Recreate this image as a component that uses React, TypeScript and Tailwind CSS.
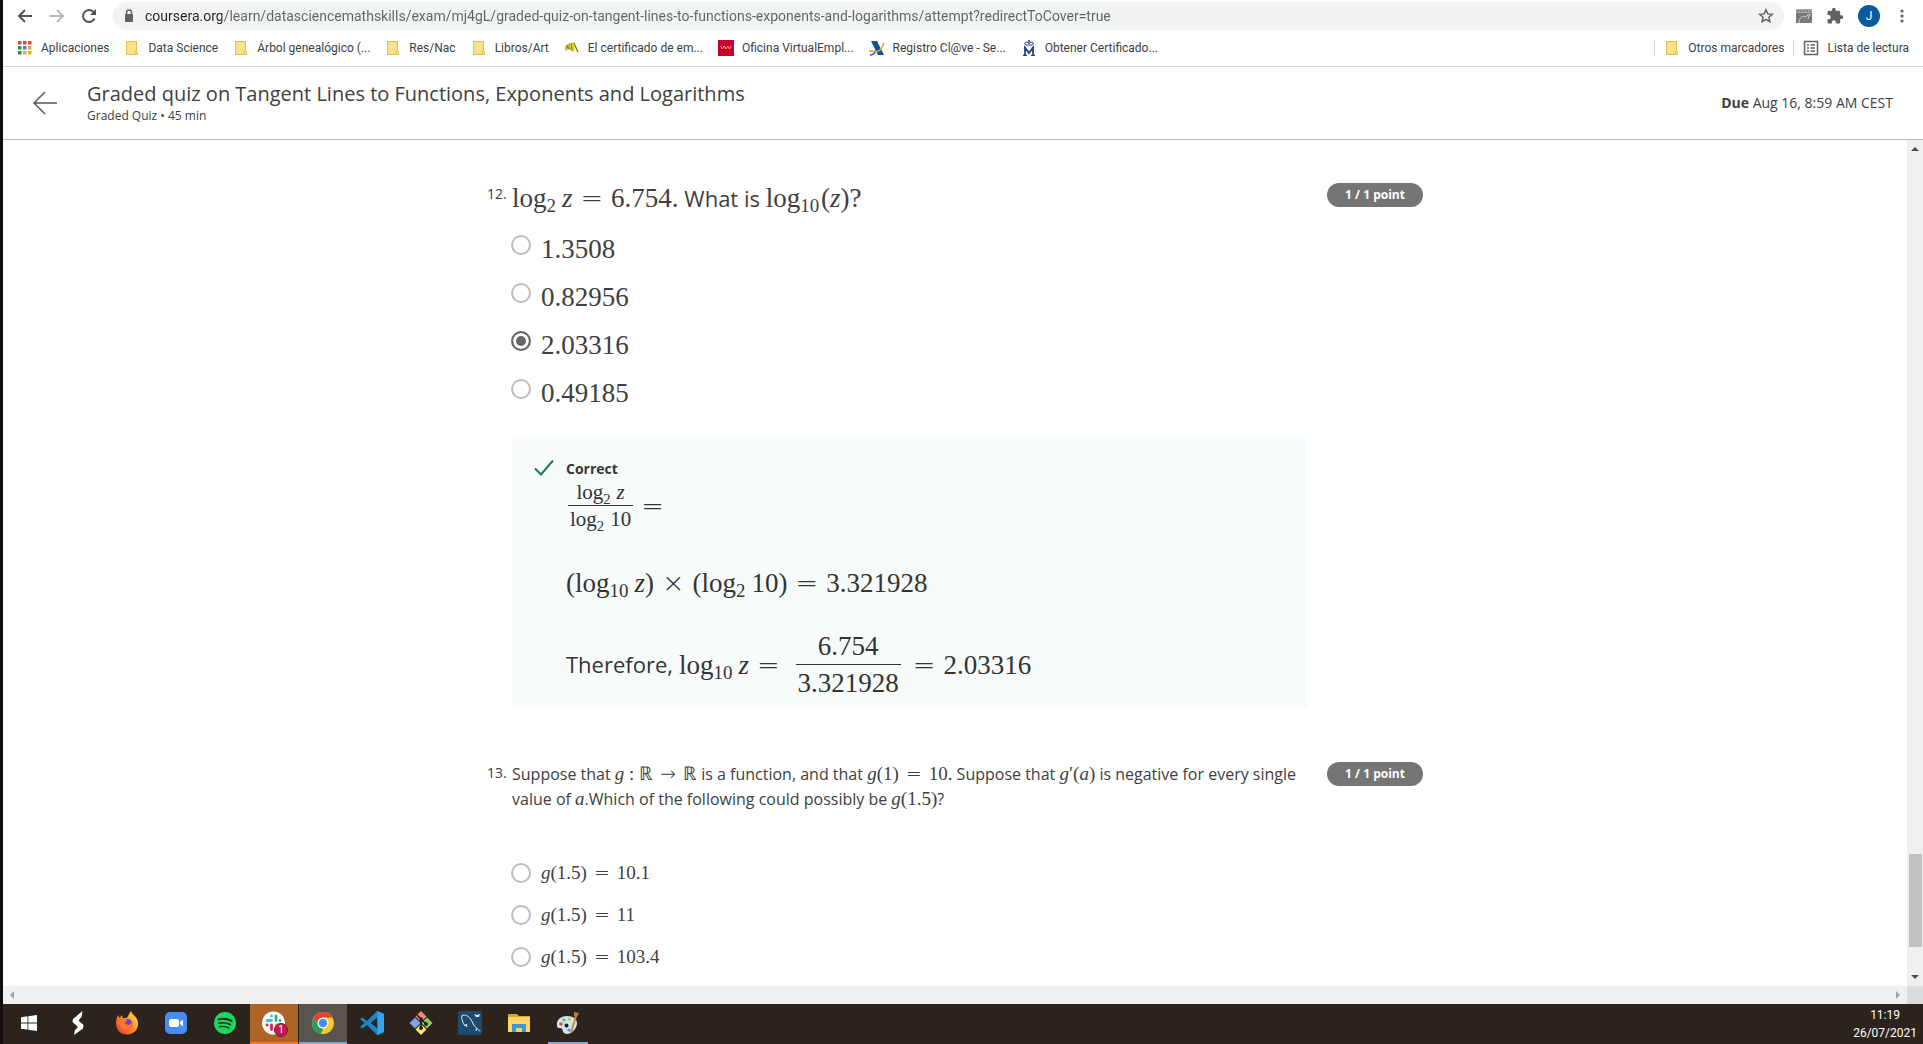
import React from "react";

/* ---------- math ---------- */

function V({ children }: { children: React.ReactNode }) {
  return <i className="italic">{children}</i>;
}

function Op({ small, children }: { small?: boolean; children: React.ReactNode }) {
  return (
    <span
      className={`font-['DejaVu_Sans_Light','DejaVu_Sans',sans-serif] leading-none font-extralight ${small ? "mx-[7px] text-[19px]" : "mx-2 text-[27px]"}`}
    >
      {children}
    </span>
  );
}

function Log({ base, tight }: { base: string; tight?: boolean }) {
  return (
    <span className={tight ? "mr-0.5" : "mr-1.5"}>
      log<sub className="bottom-[-5px] text-[70%]">{base}</sub>
    </span>
  );
}

function MathText({ big, children }: { big?: boolean; children: React.ReactNode }) {
  return (
    <span className={`font-['Liberation_Serif',serif] leading-none whitespace-nowrap ${big ? "text-[27px]" : "text-[19px]"}`}>
      {children}
    </span>
  );
}

function Frac({ top, bottom }: { top: React.ReactNode; bottom: React.ReactNode }) {
  return (
    <span className="inline-flex flex-col items-center">
      <span className="px-1">{top}</span>
      <span className="w-full border-t border-current px-0.5 text-center">{bottom}</span>
    </span>
  );
}

/* ---------- quiz ---------- */

function PointBadge() {
  return (
    <span className="flex h-6 w-24 shrink-0 items-center justify-center rounded-full bg-[#757575] text-xs font-bold text-white">
      1 / 1 point
    </span>
  );
}

function Choice({ name, checked, big, children }: { name: string; checked?: boolean; big?: boolean; children: React.ReactNode }) {
  return (
    <label className={big ? "flex h-12 items-start gap-[10px]" : "flex h-[42px] items-start gap-[10px]"}>
      <input
        type="radio"
        name={name}
        defaultChecked={checked}
        className="size-5 shrink-0 appearance-none rounded-full border-2 border-[#bdbdbd] checked:border-[#666] checked:bg-[#666] checked:shadow-[inset_0_0_0_3px_white]"
      />
      <span className={big ? "pt-px leading-[30px]" : "leading-5"}>
        <MathText big={big}>{children}</MathText>
      </span>
    </label>
  );
}

function Feedback() {
  return (
    <section className="mt-3 flex h-[269px] gap-3 bg-[#f7fbfa] px-[22px] pt-5 text-[#333]">
      <svg viewBox="0 0 20 20" className="size-5 shrink-0" fill="none" stroke="#1f7a5a" strokeWidth="2">
        <path d="M1 9.500l6 6L19 1.500" />
      </svg>
      <div>
        <h3 className="text-sm leading-5 font-bold text-[#373737]">Correct</h3>
        <div className="flex items-center font-['Liberation_Serif',serif]">
          <span className="ml-[2px] text-[21px] leading-[26px]">
            <Frac top={<><Log base="2" /><V>z</V></>} bottom={<><Log base="2" />10</>} />
          </span>
          <Op>=</Op>
        </div>
        <p className="mt-[37px] leading-8">
          <MathText big>
            (<Log base="10" /><V>z</V>)<Op>×</Op>(<Log base="2" />10)<Op>=</Op>3.321928
          </MathText>
        </p>
        <div className="mt-[26px] flex items-center whitespace-nowrap">
          <span className="mr-1.5 text-[22px]">Therefore,</span>
          <MathText big>
            <Log base="10" /><V>z</V><Op>=</Op>
          </MathText>
          <span className="mr-1 ml-2 font-['Liberation_Serif',serif] text-[27px] leading-9">
            <Frac top="6.754" bottom="3.321928" />
          </span>
          <MathText big>
            <Op>=</Op>2.03316
          </MathText>
        </div>
      </div>
    </section>
  );
}

function Quiz() {
  return (
    <main className="min-w-0 flex-1 overflow-hidden bg-white">
      <div className="mx-auto max-w-[936px] pt-[43px] text-[#404040]">
        <article className="flex items-start">
          <span className="w-[25px] shrink-0 text-sm leading-[22px]">12.</span>
          <div className="mr-5 min-w-0 flex-1">
            <h2 className="text-[22px] leading-[30px]">
              <MathText big>
                <Log base="2" /><V>z</V><Op>=</Op>6.754.
              </MathText>{" "}
              What is{" "}
              <MathText big>
                <Log base="10" tight />(<V>z</V>)?
              </MathText>
            </h2>
            <div className="mt-[22px] -ml-px">
              <Choice big name="q12">1.3508</Choice>
              <Choice big name="q12">0.82956</Choice>
              <Choice big name="q12" checked>2.03316</Choice>
              <Choice big name="q12">0.49185</Choice>
            </div>
            <Feedback />
          </div>
          <PointBadge />
        </article>
        <article className="mt-[54px] flex items-start">
          <span className="w-[25px] shrink-0 text-sm leading-[22px]">13.</span>
          <div className="mr-5 min-w-0 flex-1">
            <h2 className="text-base leading-[25px]">
              Suppose that <MathText><V>g</V> : ℝ<Op small>→</Op>ℝ</MathText> is a function, and that{" "}
              <MathText><V>g</V>(1)<Op small>=</Op>10.</MathText> Suppose that{" "}
              <MathText><V>g</V>′(<V>a</V>)</MathText> is negative for every single value of{" "}
              <MathText><V>a</V></MathText>.Which of the following could possibly be{" "}
              <MathText><V>g</V>(1.5)</MathText>?
            </h2>
            <div className="mt-[51px] -ml-px">
              <Choice name="q13"><V>g</V>(1.5)<Op small>=</Op>10.1</Choice>
              <Choice name="q13"><V>g</V>(1.5)<Op small>=</Op>11</Choice>
              <Choice name="q13"><V>g</V>(1.5)<Op small>=</Op>103.4</Choice>
            </div>
          </div>
          <PointBadge />
        </article>
      </div>
    </main>
  );
}

/* ---------- browser chrome ---------- */

function FolderIcon() {
  return (
    <svg viewBox="0 0 16 16" className="size-4 shrink-0">
      <path d="M2.500 1.500h10v9.500l1 .5v3h-11z" fill="#fde18a" stroke="#e5c048" />
      <path d="M11 14.500v-3l1.500-1" fill="none" stroke="#e5c048" />
    </svg>
  );
}

function AppsIcon() {
  const colors = ["#d04a3e", "#d04a3e", "#d04a3e", "#2f8f4e", "#3f7de0", "#e0b030", "#2f8f4e", "#e0b030", "#e0b030"];
  return (
    <svg viewBox="0 0 16 16" className="size-4 shrink-0">
      {colors.map((c, i) => (
        <rect key={i} x={1 + (i % 3) * 5} y={1 + Math.floor(i / 3) * 5} width="3.500" height="3.500" fill={c} />
      ))}
    </svg>
  );
}

function CertIcon() {
  return (
    <svg viewBox="0 0 16 16" className="size-4 shrink-0">
      <path d="M2 5l4-2 1 7-3-1-2 2-1-3z" fill="#b9b51d" />
      <path d="M7 3l3-1 5 11-3-2-1-4-1 5-2-1z" fill="#e3d51c" />
      <path d="M7 3l1 8M10 3l4 9M3 6l2 3" stroke="#6d6b14" fill="none" />
    </svg>
  );
}

function MadridIcon() {
  return (
    <svg viewBox="0 0 16 16" className="size-4 shrink-0">
      <rect width="16" height="16" fill="#c9002b" />
      <path d="M2.500 6l2 3 1.800-3 1.700 3 1.800-3 1.700 3 2-3" stroke="#f3b9c4" strokeWidth=".9" fill="none" />
    </svg>
  );
}

function TaxIcon() {
  return (
    <svg viewBox="0 0 16 16" className="size-4 shrink-0">
      <path d="M2 1h6l7 14H9z" fill="#15508f" />
      <path d="M1 15c3 0 5-2 6-5" stroke="#2a6aa8" strokeWidth="1.500" fill="none" />
      <path d="M0 11c6-1 10 5 15-8" stroke="#dfa43a" strokeWidth="1.500" fill="none" />
    </svg>
  );
}

function MintIcon() {
  return (
    <svg viewBox="0 0 16 16" className="size-4 shrink-0" fill="none" stroke="#1d3c8c">
      <path d="M5 5L3.500 3C5 1.500 7 2 8 3.500 9 2 11 1.500 12.500 3L11 5zM8 0v4M7 1h2" />
      <path d="M2 15.400h4M10 15.400h4" strokeWidth="1.200" />
      <path d="M4 15V7.500L8 13l4-5.500V15M3 7.500h2M11 7.500h2" strokeWidth="1.700" />
    </svg>
  );
}

function Bookmark({ icon, children }: { icon: React.ReactNode; children: React.ReactNode }) {
  return (
    <a href="#" className="flex items-center gap-2 whitespace-nowrap">
      {icon}
      {children}
    </a>
  );
}

function BrowserBar() {
  return (
    <div className="border-b border-[#d5d7da] bg-white font-['Roboto',sans-serif] text-[#3c4043]">
      <div className="flex h-8 items-center pr-[13px] pl-[14px]">
        <button aria-label="Atrás" className="w-8">
          <svg viewBox="0 0 16 16" className="size-4" fill="none" stroke="#505357" strokeWidth="2"><path d="M15 8H2M8 2L2 8l6 6" /></svg>
        </button>
        <button aria-label="Adelante" className="w-8">
          <svg viewBox="0 0 16 16" className="size-4" fill="none" stroke="#b6b8bb" strokeWidth="2"><path d="M1 8h13M8 2l6 6-6 6" /></svg>
        </button>
        <button aria-label="Recargar" className="w-8">
          <svg viewBox="0 0 16 16" className="size-4" fill="none" stroke="#505357" strokeWidth="2">
            <path d="M13.500 10.500A6 6 0 1 1 12.500 4" /><path d="M15 1v6H9z" fill="#505357" stroke="none" />
          </svg>
        </button>
        <div className="flex h-7 flex-1 items-center rounded-full bg-[#f1f3f4] pr-[10px] pl-[10px]">
          <svg viewBox="0 0 12 16" className="mr-[10px] h-4 w-3" fill="none">
            <rect x="2" y="6" width="8" height="8" rx="1" fill="#5f6368" /><path d="M3.500 7V4.500a2.500 2.500 0 0 1 5 0V7" stroke="#5f6368" strokeWidth="1.500" />
          </svg>
          <input
            aria-label="Dirección"
            className="min-w-0 flex-1 bg-[linear-gradient(90deg,#202124_77px,#5f6368_77px)] bg-clip-text text-sm text-transparent outline-none"
            defaultValue="coursera.org/learn/datasciencemathskills/exam/mj4gL/graded-quiz-on-tangent-lines-to-functions-exponents-and-logarithms/attempt?redirectToCover=true"
          />
          <button aria-label="Favorito">
            <svg viewBox="0 0 16 16" className="size-4" fill="none" stroke="#5f6368" strokeWidth="1.500"><path d="M8 1.800l1.800 4.100 4.500.4-3.400 2.900 1 4.400L8 11.300l-3.900 2.300 1-4.400L1.700 6.300l4.500-.4z" /></svg>
          </button>
        </div>
        <div className="flex items-center gap-[14px] pl-3">
          <button aria-label="Extensión">
            <svg viewBox="0 0 16 16" className="size-4"><rect y="1" width="16" height="14" fill="#77797b" /><path d="M0 1h16v4H0z" fill="#a6a8aa" /><path d="M1 3h14" stroke="#5b5d60" strokeDasharray="2 1" /><path d="M3 15c0-6 4-7 6-6l5-3-2 5" stroke="#d0d1d2" fill="none" /></svg>
          </button>
          <button aria-label="Extensiones">
            <svg viewBox="0 0 24 24" className="size-[18px]" fill="#5f6368"><path d="M20.500 11H19V7c0-1.100-.9-2-2-2h-4V3.500a2.500 2.500 0 0 0-5 0V5H4c-1.100 0-2 .9-2 2v3.800h1.500a2.700 2.700 0 0 1 0 5.400H2V20c0 1.100.9 2 2 2h3.800v-1.500a2.700 2.700 0 0 1 5.400 0V22H17c1.100 0 2-.9 2-2v-4h1.500a2.500 2.500 0 0 0 0-5z" /></svg>
          </button>
          <button className="size-[22px] rounded-full bg-[#0b5a9d] text-xs text-white">J</button>
          <button aria-label="Menú">
            <svg viewBox="0 0 16 16" className="size-4" fill="#5f6368"><circle cx="8" cy="3" r="1.600" /><circle cx="8" cy="8" r="1.600" /><circle cx="8" cy="13" r="1.600" /></svg>
          </button>
        </div>
      </div>
      <nav className="mb-0.5 flex h-8 items-center gap-[15px] px-[14px] text-xs">
        <Bookmark icon={<AppsIcon />}>Aplicaciones</Bookmark>
        <Bookmark icon={<FolderIcon />}>Data Science</Bookmark>
        <Bookmark icon={<FolderIcon />}>Árbol genealógico (...</Bookmark>
        <Bookmark icon={<FolderIcon />}>Res/Nac</Bookmark>
        <Bookmark icon={<FolderIcon />}>Libros/Art</Bookmark>
        <Bookmark icon={<CertIcon />}>El certificado de em...</Bookmark>
        <Bookmark icon={<MadridIcon />}>Oficina VirtualEmpl...</Bookmark>
        <Bookmark icon={<TaxIcon />}>Registro Cl@ve - Se...</Bookmark>
        <Bookmark icon={<MintIcon />}>Obtener Certificado...</Bookmark>
        <div className="ml-auto flex items-center gap-[9px]">
          <span className="h-4 w-px bg-[#cfd1d4]" />
          <Bookmark icon={<FolderIcon />}>Otros marcadores</Bookmark>
          <span className="h-4 w-px bg-[#cfd1d4]" />
          <Bookmark
            icon={
              <svg viewBox="0 0 16 16" className="size-4" fill="none" stroke="#5f6368" strokeWidth="1.500">
                <rect x="1.500" y="1.500" width="13" height="13" /><path d="M4 5h2M7.500 5H12M4 8h2M7.500 8H12M4 11h2M7.500 11H12" />
              </svg>
            }
          >
            Lista de lectura
          </Bookmark>
        </div>
      </nav>
    </div>
  );
}

function QuizHeader() {
  return (
    <header className="flex h-[73px] items-center border-b border-[#b8b8b8] bg-white px-[30px] text-[#404040]">
      <button aria-label="Back" className="w-[54px]">
        <svg viewBox="0 0 24 24" className="size-6" fill="none" stroke="#555" strokeWidth="1.500"><path d="M24 12H1M12 1L1 12l11 11" /></svg>
      </button>
      <div className="flex-1 pt-0.5">
        <h1 className="text-xl leading-6">Graded quiz on Tangent Lines to Functions, Exponents and Logarithms</h1>
        <p className="text-xs leading-5">Graded Quiz • 45 min</p>
      </div>
      <p className="text-sm"><b>Due</b> Aug 16, 8:59 AM CEST</p>
    </header>
  );
}

function Arrow({ d, fill }: { d: string; fill: string }) {
  return <svg viewBox="0 0 8 8" className="size-2" fill={fill}><path d={d} /></svg>;
}

function VerticalScroll() {
  return (
    <div className="flex w-4 shrink-0 flex-col items-center bg-[#f0f0f0] py-[5px]">
      <Arrow d="M0 6l4-4 4 4z" fill="#505050" />
      <div className="flex-1" />
      <div className="mb-[26px] h-[93px] w-[13px] bg-[#c1c1c1]" />
      <Arrow d="M0 2l4 4 4-4z" fill="#505050" />
    </div>
  );
}

/* ---------- taskbar ---------- */

function WindowsIcon() {
  return <svg viewBox="0 0 16 16" className="size-4" fill="#fff"><path d="M0 2.200l6.500-.9v6.200H0zM7.300 1.200L16 0v7.500H7.300zM0 8.400h6.500v6.200L0 13.700zM7.300 8.400H16V16l-8.700-1.200z" /></svg>;
}
function SIcon() {
  return <svg viewBox="0 0 24 24" className="size-6" fill="#fff"><path d="M16.500 0l-1 6-3 3.500 5 4.500-.5 3.500L8 24l1-5 3-3-5.500-5 .5-3z" /></svg>;
}
function FirefoxIcon() {
  return (
    <svg viewBox="0 0 24 24" className="size-6">
      <defs><linearGradient id="fx" x1="1" y1="0" x2="0" y2="1"><stop offset="0" stopColor="#ffe845" /><stop offset=".5" stopColor="#ff8a22" /><stop offset="1" stopColor="#f0245c" /></linearGradient></defs>
      <path d="M12 23.500C5.500 23.500 1 19 1 12.500 1 9 2 6 3 4l1.500 3L7 4l1 3.500c2-1 3-1 4-.5 1-3 3-5 4-7 1 3 3 4 5 6.500s2 5 2 6.500c0 6-4.500 10.500-11 10.500z" fill="url(#fx)" />
      <circle cx="12.500" cy="13" r="5" fill="#7a3fc8" />
      <path d="M5 9c3-2 6-1 8 1-3 0-4 2-2 3 2 2 5 1 6-2 1 5-2 8-6 8s-7-4-6-10z" fill="#ff7a27" />
    </svg>
  );
}
function ZoomIcon() {
  return <svg viewBox="0 0 24 24" className="size-6"><rect x="1" y="1" width="22" height="22" rx="5" fill="#4a8cf7" /><rect x="5" y="8" width="10" height="8" rx="2" fill="#fff" /><path d="M16 11l3-2.500v7L16 13z" fill="#fff" /></svg>;
}
function SpotifyIcon() {
  return <svg viewBox="0 0 24 24" className="size-6" fill="none" stroke="#1a2a1a" strokeLinecap="round"><circle cx="12" cy="12" r="11" fill="#1ed760" stroke="none" /><path d="M5.500 8.500c4-1.200 9-.8 13 1.400" strokeWidth="2" /><path d="M6 12.300c4-1 8-.6 11.300 1.300" strokeWidth="1.700" /><path d="M6.500 15.800c3.500-.8 6.500-.5 9.500 1.200" strokeWidth="1.400" /></svg>;
}
function SlackIcon() {
  return (
    <span className="relative">
      <svg viewBox="0 0 24 24" className="size-6" strokeWidth="2.800" strokeLinecap="round" fill="none">
        <circle cx="11.500" cy="12" r="11.500" fill="#fff" stroke="none" />
        <path d="M9.500 5v.1M5 9.500h4.500" stroke="#36c5f0" /><path d="M14 5v4.500M18 9.500h.1" stroke="#2eb67d" /><path d="M5 14h.1M9.500 14v4.500" stroke="#e01e5a" /><path d="M14 18.500v.1M14 14h4" stroke="#ecb22e" />
      </svg>
      <span className="absolute -right-0.5 -bottom-0.5 flex size-[14px] items-center justify-center rounded-full border border-[#7c1238] bg-[#c8184f] text-[10px] leading-3 text-white">1</span>
    </span>
  );
}
function ChromeIcon() {
  return (
    <svg viewBox="0 0 24 24" className="size-6">
      <circle cx="12" cy="12" r="11" fill="#fbc926" />
      <path d="M2.500 6.500A11 11 0 0 1 21.500 6.500H12L7.200 14.800z" fill="#dc4437" />
      <path d="M2.500 6.500L7.200 14.800c1 1.700 3 2.700 5 2.700L10 22.800A11 11 0 0 1 2.500 6.500z" fill="#1ba160" />
      <circle cx="12" cy="12" r="5.500" fill="#fff" /><circle cx="12" cy="12" r="4.300" fill="#4a8af4" />
    </svg>
  );
}
function CodeIcon() {
  return <svg viewBox="0 0 24 24" className="size-6"><path d="M17 0l7 3v18l-7 3L7 14l-4.500 3.500L0 16l4.500-4L0 8l2.500-1.500L7 10zM17.500 6.500L10.500 12l7 5.500z" fill="#1b85cc" fillRule="evenodd" /><path d="M17.500 0L24 3v18l-6.500 3z" fill="#35a6ee" /></svg>;
}
function GitIcon() {
  return (
    <svg viewBox="0 0 24 24" className="size-6">
      <path d="M12 0l5.500 5.500L12 11 6.500 5.500z" fill="#f08a7c" /><path d="M6 6.500l5.500 5.500L6 17.500.5 12z" fill="#7ea4ea" /><path d="M18 6.500l5.500 5.500L18 17.500 12.500 12z" fill="#90cf60" /><path d="M12 13l5.500 5.500L12 24l-5.500-5.500z" fill="#fbe06a" />
      <path d="M8 4l4 4v10M12 8l5 5" stroke="#2b211b" strokeWidth="1.600" fill="none" /><circle cx="12" cy="8" r="1.800" fill="#2b211b" /><circle cx="12" cy="17" r="2" fill="#2b211b" /><circle cx="17" cy="13" r="2" fill="#2b211b" />
    </svg>
  );
}
function MysqlIcon() {
  return <svg viewBox="0 0 24 24" className="size-6" fill="none" stroke="#e6eff5"><rect width="24" height="24" rx="2" fill="#1d4a6d" stroke="none" /><path d="M7 15C5 12 3 8 4 4.500c3-1 6 0 8.500 3.500s3 7 6 9l3.500 3.500M7 15l1-2 1 3M18.500 17l-.5 3" /><path d="M16 3l3 1 3-1-1 3h-3z" fill="#e6eff5" stroke="none" /></svg>;
}
function ExplorerIcon() {
  return <svg viewBox="0 0 24 24" className="size-6"><path d="M1 3h9l2 2h11v4H1z" fill="#d9a521" /><path d="M1 6h22v15H1z" fill="#fcd767" /><path d="M5 21v-8h14v8h-4v-4H9v4z" fill="#3f97d3" /></svg>;
}
function PaintIcon() {
  return (
    <svg viewBox="0 0 24 24" className="size-6">
      <path d="M11 5C4 5 0 10 1 15c.5 3 3 2 4.500 2.500S6 21 9 22.500c5 2 12-4 12-10.500 0-4-4-7-10-7z" fill="#cfe4ee" /><circle cx="5" cy="13" r="1.800" fill="#d9533c" /><circle cx="8" cy="9" r="1.600" fill="#62b64a" /><circle cx="13.500" cy="8" r="1.600" fill="#e6b92f" /><circle cx="10.500" cy="14.500" r="2" fill="#17202a" /><circle cx="13" cy="19" r="1.600" fill="#4a90d9" />
      <path d="M20 5l-5 17" stroke="#c9893c" strokeWidth="2" /><path d="M18 5l0-4 5 1-2 4z" fill="#b77a4c" />
    </svg>
  );
}

function Taskbar() {
  const plain = "flex h-full w-12 items-center justify-center border-b-2 border-transparent";
  const items: [string, React.ReactNode, string][] = [
    ["Inicio", <WindowsIcon />, plain],
    ["Editor", <SIcon />, plain],
    ["Firefox", <FirefoxIcon />, plain],
    ["Zoom", <ZoomIcon />, plain],
    ["Spotify", <SpotifyIcon />, plain],
    ["Slack", <SlackIcon />, "flex h-full w-12 items-center justify-center border-b-2 border-[#f97a16] bg-[#ae6327]"],
    ["Chrome", <ChromeIcon />, "flex h-full w-12 items-center justify-center border-b-2 border-[#76a9dc] bg-[#5a544e]"],
    ["Code", <CodeIcon />, plain],
    ["Git", <GitIcon />, plain],
    ["MySQL", <MysqlIcon />, plain],
    ["Explorador", <ExplorerIcon />, plain],
    ["Paint", <PaintIcon />, "mx-1 flex h-full w-10 items-center justify-center border-b-2 border-[#76a9dc]"],
  ];
  return (
    <footer className="flex h-10 shrink-0 items-center justify-between bg-[#2c241c] pr-[6px] font-['Roboto',sans-serif]">
      <div className="flex h-full gap-px pl-[2px]">
        {items.map(([label, icon, cls]) => (
          <button key={label} aria-label={label} className={cls}>{icon}</button>
        ))}
      </div>
      <div className="flex flex-col items-center text-xs leading-[18px] text-white">
        <time>11:19</time>
        <time>26/07/2021</time>
      </div>
    </footer>
  );
}

export default function App() {
  return (
    <div className="flex h-screen flex-col overflow-hidden border-l-[3px] border-[#120c10] bg-white font-['Open_Sans',sans-serif]">
      <BrowserBar />
      <QuizHeader />
      <div className="flex min-h-0 flex-1">
        <Quiz />
        <VerticalScroll />
      </div>
      <div className="flex h-[18px] shrink-0 bg-[#f0f0f0]">
        <div className="flex flex-1 items-center justify-between px-[5px]">
          <Arrow d="M6 0L2 4l4 4z" fill="#a3a3a3" />
          <Arrow d="M2 0l4 4-4 4z" fill="#a3a3a3" />
        </div>
        <div className="w-4 bg-[#dcdcdc]" />
      </div>
      <Taskbar />
    </div>
  );
}
